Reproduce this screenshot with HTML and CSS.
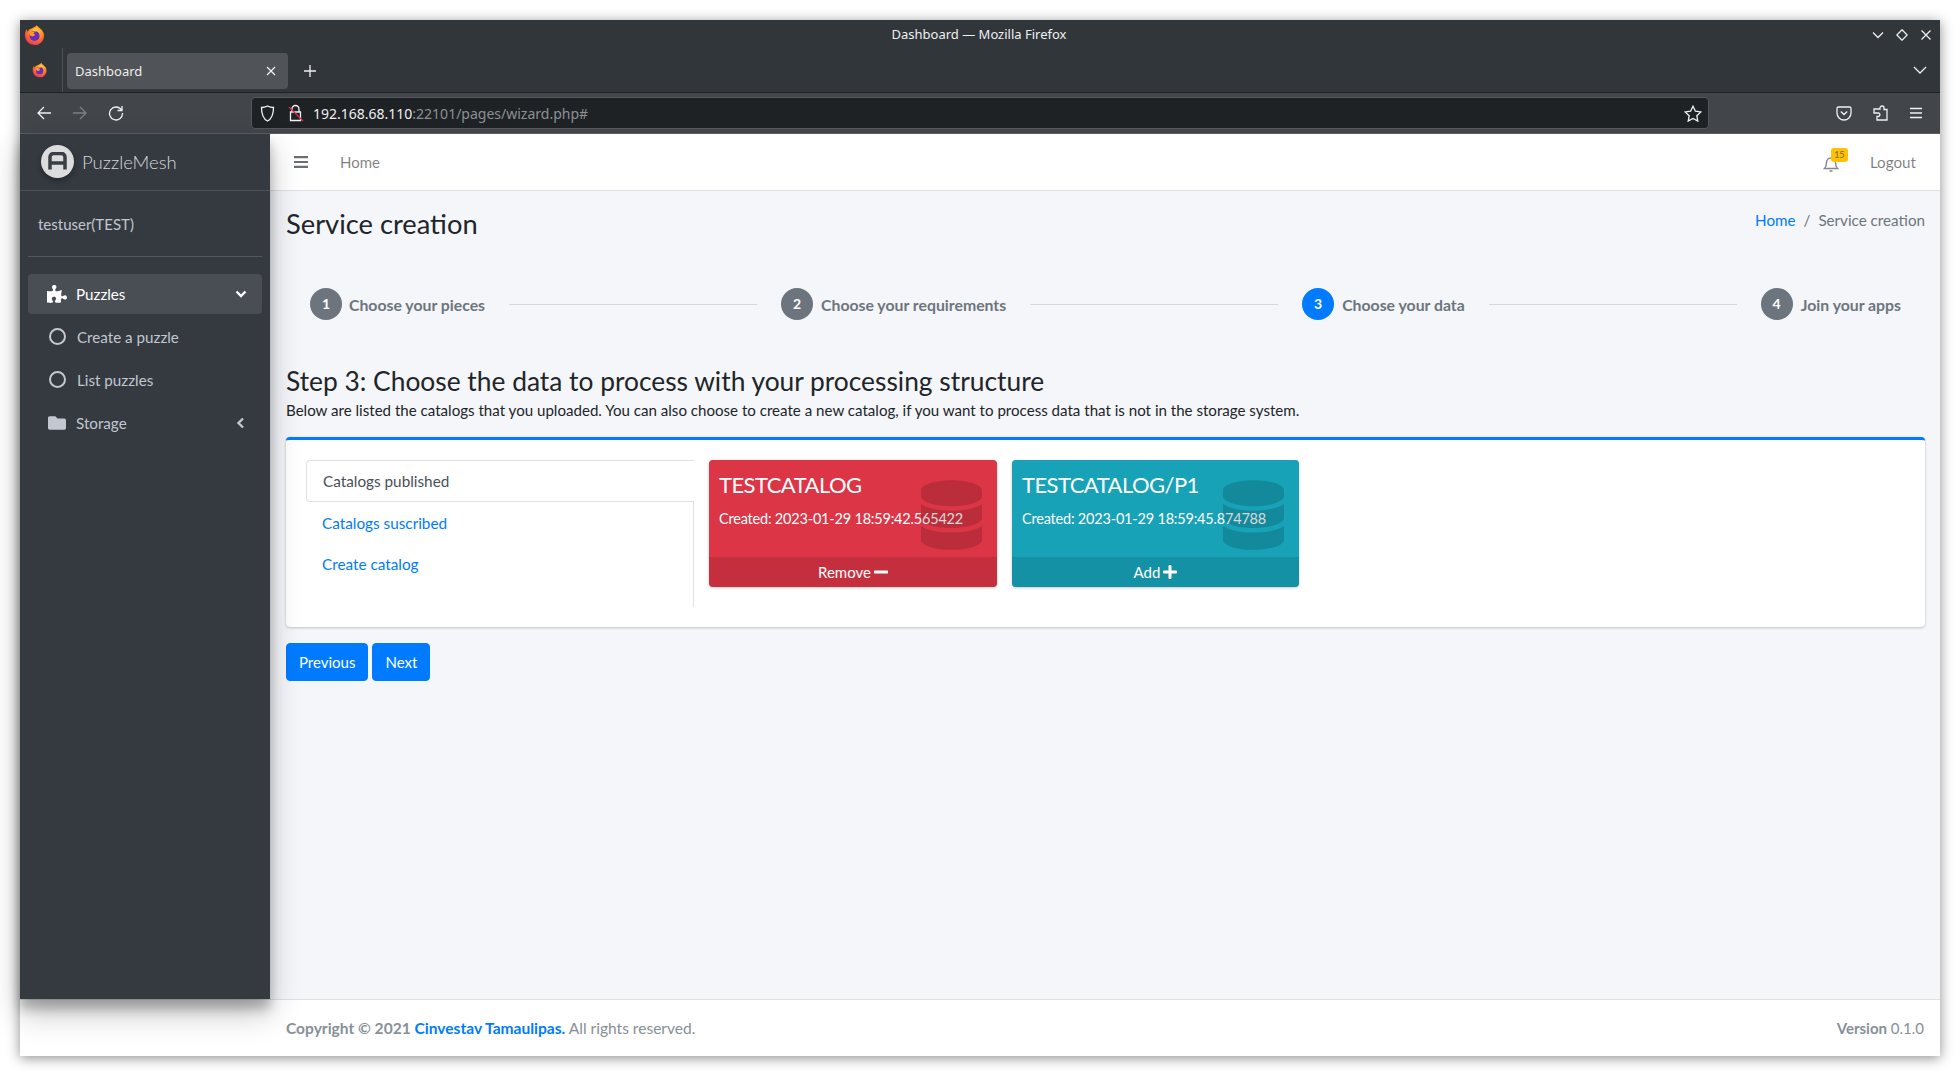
FILE: index.html
```html
<!DOCTYPE html>
<html lang="en">
<head>
  <meta charset="UTF-8">
  <title>Dashboard</title>
  <link rel="stylesheet" href="styles.css">
</head>
<body>
  <svg class="defs" width="0" height="0">
    <defs>
      <radialGradient id="fxbody" cx="60%" cy="30%" r="80%">
        <stop offset="0" stop-color="#ffd43a"/>
        <stop offset=".45" stop-color="#ff8a1f"/>
        <stop offset="1" stop-color="#e3245c"/>
      </radialGradient>
      <symbol id="firefox" viewBox="0 0 24 24">
        <path fill="url(#fxbody)" d="M14 1c1 3 6 4 7.500 9 1.500 6-2.500 13-9.500 13S1 18 1 12c0-3 1-5 2-6.500 0 1.500.6 2.300 1.300 2.800C5 6 7 5 8.500 5 10 3.500 13 3 14 1z"/>
        <circle cx="11.500" cy="13" r="5.500" fill="#6a2bc4"/>
        <path fill="#ff9a26" d="M6 10c2-2 6-3 8-1.500-2 0-3.500 1-3.500 2 2 .5 2 2 0 2.500C8 14 6 12.500 6 10z"/>
      </symbol>
      <symbol id="database" viewBox="0 0 448 512">
        <path d="M448 73.143v45.714C448 159.143 347.667 192 224 192S0 159.143 0 118.857V73.143C0 32.857 100.333 0 224 0s224 32.857 224 73.143zM448 176v102.857C448 319.143 347.667 352 224 352S0 319.143 0 278.857V176c48.125 33.143 136.208 48.572 224 48.572S399.874 209.143 448 176zm0 160v102.857C448 479.143 347.667 512 224 512S0 479.143 0 438.857V336c48.125 33.143 136.208 48.572 224 48.572S399.874 369.143 448 336z"/>
      </symbol>
    </defs>
  </svg>

  <div class="window">
    <div class="titlebar">
      <svg class="fx-big"><use href="#firefox"/></svg>
      <div class="win-title">Dashboard — Mozilla Firefox</div>
      <div class="win-btns">
        <svg width="12" height="12" viewBox="0 0 12 12"><path d="M1 3.500l5 5 5-5"/></svg>
        <svg width="12" height="12" viewBox="0 0 12 12"><path d="M6 .8L11.200 6 6 11.200.8 6z"/></svg>
        <svg width="12" height="12" viewBox="0 0 12 12"><path d="M1.500 1.500l9 9M10.500 1.500l-9 9"/></svg>
      </div>
    </div>

    <div class="tabbar">
      <div class="tab-fx"><svg class="fx-small"><use href="#firefox"/></svg></div>
      <div class="tab">
        <span>Dashboard</span>
        <svg width="10" height="10" viewBox="0 0 10 10"><path d="M1 1l8 8M9 1l-8 8"/></svg>
      </div>
      <svg class="tab-new" width="14" height="14" viewBox="0 0 14 14"><path d="M7 1v12M1 7h12"/></svg>
      <svg class="tab-list" width="14" height="14" viewBox="0 0 14 14"><path d="M1 4l6 6 6-6"/></svg>
    </div>

    <div class="toolbar">
      <div class="nav-btns">
        <svg width="16" height="16" viewBox="0 0 16 16"><path d="M15 8H2M8 2L2 8l6 6"/></svg>
        <svg class="dim" width="16" height="16" viewBox="0 0 16 16"><path d="M1 8h13M8 2l6 6-6 6"/></svg>
        <svg width="16" height="16" viewBox="0 0 16 16"><path d="M13.500 5A6.500 6.500 0 1 0 14.500 8M14 1v4.500H9.500"/></svg>
      </div>
      <div class="urlbar">
        <svg width="15" height="17" viewBox="0 0 15 17"><path d="M7.500 1c2 1 4 1.500 6 1.500 0 6-1 11-6 13.500-5-2.500-6-7.500-6-13.500 2 0 4-.5 6-1.500z"/></svg>
        <svg class="lock" width="16" height="18" viewBox="0 0 16 18"><path d="M4 8V5a3.500 3.500 0 0 1 7 0v3M2.500 8h10v8.500h-10z"/><path class="slash" d="M1 3l14 14"/></svg>
        <div class="url"><b>192.168.68.110</b>:22101/pages/wizard.php#</div>
        <svg width="18" height="17" viewBox="0 0 18 17"><path d="M9 1.200l2.400 5 5.400.7-4 3.800 1 5.400L9 13.500l-4.800 2.600 1-5.400-4-3.800 5.400-.7z"/></svg>
      </div>
      <div class="tool-btns">
        <svg width="16" height="16" viewBox="0 0 16 16"><path d="M2.500 2h11A1.500 1.500 0 0 1 15 3.500V8A7 7 0 0 1 1 8V3.500A1.500 1.500 0 0 1 2.500 2zM4.800 6.500L8 9.500l3.200-3"/></svg>
        <svg width="16" height="16" viewBox="0 0 16 16"><path d="M8 3.500V3a2 2 0 0 1 4 0v1.500h3V15H5v-3.500h1.200a1.700 1.700 0 0 0 0-3.500H2V4h6z"/></svg>
        <svg width="16" height="16" viewBox="0 0 16 16"><path d="M2 3.500h12M2 8h12M2 12.500h12"/></svg>
      </div>
    </div>

    <div class="app">
      <aside class="sidebar">
        <div class="brand">
          <div class="brand-logo">
            <svg width="19" height="19" viewBox="0 0 19 19"><path d="M2 17.500V5a3.500 3.500 0 0 1 3.500-3.500h8A3.500 3.500 0 0 1 17 5v12.500M2 11h15" /></svg>
          </div>
          <span class="brand-name">PuzzleMesh</span>
        </div>
        <div class="user">testuser(TEST)</div>
        <nav class="menu">
          <a class="menu-item active" href="#">
            <svg class="menu-ico" width="20" height="18" viewBox="0 0 576 512"><path d="M519.442 288.651c-41.519 0-59.5 31.593-82.058 31.593C377.409 320.244 432 144 432 144s-196.288 80-196.288-3.297c0-35.827 36.288-46.25 36.288-85.985C272 19.216 243.885 0 210.539 0c-34.654 0-66.366 18.891-66.366 56.346 0 41.364 31.711 59.277 31.711 81.75C175.885 207.719 0 166.758 0 166.758v333.237s178.635 41.047 178.635-28.662c0-22.473-40-40.107-40-81.471 0-37.456 29.25-56.346 63.577-56.346 33.673 0 61.788 19.216 61.788 54.717 0 39.735-36.288 50.158-36.288 85.985 0 60.803 129.675 25.73 181.23 25.73 0 0-34.725-120.101 25.827-120.101 35.962 0 46.423 36.152 86.308 36.152C556.712 416 576 387.99 576 354.443c0-34.199-18.962-65.792-56.558-65.792z"/></svg>
            <span>Puzzles</span>
            <svg class="menu-arrow" width="12" height="12" viewBox="0 0 12 12"><path d="M1.500 3.500L6 8l4.500-4.500"/></svg>
          </a>
          <a class="menu-item" href="#"><span class="ring"></span><span>Create a puzzle</span></a>
          <a class="menu-item" href="#"><span class="ring"></span><span>List puzzles</span></a>
          <a class="menu-item" href="#">
            <svg class="menu-ico" width="20" height="18" viewBox="0 0 512 512"><path d="M464 128H272l-64-64H48C21.49 64 0 85.49 0 112v288c0 26.51 21.49 48 48 48h416c26.51 0 48-21.49 48-48V176c0-26.51-21.49-48-48-48z"/></svg>
            <span>Storage</span>
            <svg class="menu-arrow" width="12" height="12" viewBox="0 0 12 12"><path d="M8 1.500L3.500 6 8 10.500"/></svg>
          </a>
        </nav>
      </aside>

      <div class="main">
        <header class="navbar">
          <svg class="burger" width="14" height="12" viewBox="0 0 14 12"><path d="M0 0h14v2.200H0zM0 4.900h14v2.200H0zM0 9.800h14V12H0z"/></svg>
          <a class="nav-home" href="#">Home</a>
          <div class="nav-bell">
            <svg width="16" height="18" viewBox="0 0 16 18"><path d="M1.500 13.500c1.500-1.500 2-3 2-6a4.500 4.500 0 0 1 9 0c0 3 .5 4.500 2 6zM6.500 16h3"/></svg>
            <span class="badge">15</span>
          </div>
          <a class="nav-logout" href="#">Logout</a>
        </header>

        <section class="content">
          <div class="page-head">
            <h1>Service creation</h1>
            <div class="crumbs"><a href="#">Home</a><i>/</i><span>Service creation</span></div>
          </div>

          <div class="stepper">
            <div class="step"><span class="circle">1</span><span>Choose your pieces</span></div>
            <div class="line"></div>
            <div class="step"><span class="circle">2</span><span>Choose your requirements</span></div>
            <div class="line"></div>
            <div class="step"><span class="circle current">3</span><span>Choose your data</span></div>
            <div class="line"></div>
            <div class="step"><span class="circle">4</span><span>Join your apps</span></div>
          </div>

          <h3>Step 3: Choose the data to process with your processing structure</h3>
          <p class="lead">Below are listed the catalogs that you uploaded. You can also choose to create a new catalog, if you want to process data that is not in the storage system.</p>

          <div class="panel">
            <div class="tabs">
              <a class="tab-link active" href="#">Catalogs published</a>
              <a class="tab-link" href="#">Catalogs suscribed</a>
              <a class="tab-link" href="#">Create catalog</a>
            </div>
            <div class="small-box red">
              <h4>TESTCATALOG</h4>
              <div class="created">Created: 2023-01-29 18:59:42.565422</div>
              <svg class="box-ico"><use href="#database"/></svg>
              <a class="box-foot" href="#">Remove <svg width="14" height="14" viewBox="0 0 14 14"><path d="M1 5.500h12a1 1 0 0 1 0 3H1a1 1 0 0 1 0-3z"/></svg></a>
            </div>
            <div class="small-box teal">
              <h4>TESTCATALOG/P1</h4>
              <div class="created">Created: 2023-01-29 18:59:45.874788</div>
              <svg class="box-ico"><use href="#database"/></svg>
              <a class="box-foot" href="#">Add <svg width="14" height="14" viewBox="0 0 14 14"><path d="M5.500 1a1 1 0 0 1 1-1h1a1 1 0 0 1 1 1v4.500H13a1 1 0 0 1 1 1v1a1 1 0 0 1-1 1H8.500V13a1 1 0 0 1-1 1h-1a1 1 0 0 1-1-1V8.500H1a1 1 0 0 1-1-1v-1a1 1 0 0 1 1-1h4.500z"/></svg></a>
            </div>
          </div>

          <div class="wizard-btns">
            <button>Previous</button>
            <button>Next</button>
          </div>
        </section>
      </div>
    </div>

    <footer class="footer">
      <div><b>Copyright © 2021 <a href="#">Cinvestav Tamaulipas.</a></b> All rights reserved.</div>
      <div class="version"><b>Version</b> 0.1.0</div>
    </footer>
  </div>
</body>
</html>
```

FILE: styles.css
```css
* { box-sizing: border-box; }
html, body { height: 100%; }
body {
  margin: 0;
  padding: 20px;
  background: #fff;
  font-family: Lato, "Noto Sans", sans-serif;
  font-size: 15px;
  color: #212529;
  overflow: hidden;
}
a { text-decoration: none; color: #007bff; }
.defs { position: absolute; }

.window {
  height: 1036px;
  display: flex;
  flex-direction: column;
  box-shadow: 0 2px 12px rgba(0, 0, 0, .45);
  background: #f4f6f9;
}

/* firefox chrome */
.titlebar, .tabbar, .toolbar { font-family: "Noto Sans", sans-serif; color: #eee; flex: none; }
.titlebar svg path, .tabbar svg path, .toolbar svg path {
  fill: none;
  stroke: #eff0f1;
  stroke-width: 1.3;
}
.titlebar {
  height: 28px;
  background: #31363b;
  display: grid;
  grid-template-columns: 1fr auto 1fr;
  align-items: center;
  padding: 0 8px 0 4px;
}
.fx-big { width: 22px; height: 24px; margin-top: 1px; }
.win-title { font-size: 13px; color: #eff0f1; margin-left: 2px; }
.win-btns { display: flex; justify-content: flex-end; gap: 12px; padding-top: 2px; }
.tabbar {
  height: 45px;
  background: #31363b;
  border-bottom: 1px solid #1f2225;
  display: flex;
  align-items: center;
}
.tab-fx {
  width: 43px;
  height: 44px;
  border-right: 1px solid #4d5257;
  display: flex;
  align-items: center;
  justify-content: center;
}
.fx-small { width: 16px; height: 20px; margin-right: 3px; }
.tab {
  width: 221px;
  height: 36px;
  margin: 2px 0 0 4px;
  padding: 0 12px 0 8px;
  border-radius: 4px;
  background: #505357;
  display: flex;
  align-items: center;
  justify-content: space-between;
  font-size: 13px;
}
.tab-new { margin: 2px 0 0 15px; }
.tab-list { margin-left: auto; margin-right: 13px; }
.toolbar {
  height: 41px;
  background: #42464a;
  border-bottom: 1px solid #5a5e62;
  display: flex;
  align-items: center;
  padding: 0 16px;
}
.toolbar .dim path { stroke: #7c7f83; }
.nav-btns { display: flex; gap: 20px; width: 215px; }
.urlbar {
  width: 1458px;
  height: 32px;
  background: #1f2225;
  border: 1px solid #55595d;
  border-radius: 4px;
  display: flex;
  align-items: center;
  padding: 0 6px 0 8px;
  gap: 13px;
}
.urlbar .lock { margin-right: -4px; }
.toolbar .urlbar .lock .slash { stroke: #e22850; }
.url { flex: 1; font-size: 14px; color: #8d9093; }
.url b { font-weight: 400; color: #eff0f1; }
.tool-btns { display: flex; gap: 20px; margin-left: 127px; }

/* app */
.app { flex: 1; display: flex; min-height: 0; }
.sidebar {
  width: 250px;
  flex: none;
  background: #343a40;
  position: relative;
  z-index: 2;
  padding: 0 8px;
  box-shadow: 0 14px 28px rgba(0, 0, 0, .25), 0 10px 10px rgba(0, 0, 0, .22);
}
.brand {
  height: 57px;
  margin: 0 -8px;
  padding: 0 0 2px 21px;
  border-bottom: 1px solid #4b545c;
  display: flex;
  align-items: center;
  gap: 8px;
}
.brand-logo {
  width: 33px;
  height: 33px;
  border-radius: 50%;
  background: #dcdcdc;
  display: flex;
  align-items: center;
  justify-content: center;
  box-shadow: 0 3px 6px rgba(0, 0, 0, .3);
}
.brand-logo path { fill: none; stroke: #3a3f44; stroke-width: 3.500; }
.brand-name { margin-top: 2px; font-size: 18.500px; font-weight: 300; color: rgba(255, 255, 255, .8); }
.user {
  height: 66px;
  margin-bottom: 17px;
  padding: 0 10px;
  border-bottom: 1px solid #4f5962;
  display: flex;
  align-items: center;
  color: #c2c7d0;
}
.menu { display: flex; flex-direction: column; gap: 3px; }
.menu-item {
  height: 40px;
  border-radius: 4px;
  padding: 0 15px 0 19px;
  display: flex;
  align-items: center;
  color: #c2c7d0;
  font-size: 15.200px;
}
.menu-item.active { background: rgba(255, 255, 255, .1); color: #fff; }
.menu-ico { width: 20px; margin-right: 9px; flex: none; fill: #c2c7d0; }
.active .menu-ico { fill: #fff; }
.ring {
  width: 17px;
  height: 17px;
  margin: 0 11px 2px 2px;
  border: 2px solid #c2c7d0;
  border-radius: 50%;
  flex: none;
}
.menu-arrow { margin-left: auto; }
.menu-arrow path { fill: none; stroke: #c2c7d0; stroke-width: 2.400; }
.active .menu-arrow path { stroke: #fff; }

.main { flex: 1; min-width: 0; display: flex; flex-direction: column; }
.navbar {
  height: 57px;
  flex: none;
  background: #fff;
  border-bottom: 1px solid #dee2e6;
  display: flex;
  align-items: center;
  padding: 0 24px;
  color: rgba(0, 0, 0, .5);
}
.burger { fill: #6b6f73; }
.nav-home { margin-left: 32px; color: rgba(0, 0, 0, .5); }
.nav-bell { margin-left: auto; position: relative; height: 18px; padding-top: 2px; }
.nav-bell path { fill: none; stroke: #85888b; stroke-width: 1.400; }
.badge {
  position: absolute;
  left: 8px;
  top: -5px;
  width: 17px;
  height: 14px;
  border-radius: 3px;
  background: #ffc107;
  color: #7a6a20;
  font-size: 9px;
  line-height: 14px;
  text-align: center;
}
.nav-logout { margin-left: 31px; font-size: 15.200px; color: rgba(0, 0, 0, .5); }

.content { flex: 1; padding: 0 15px 0 16px; min-height: 0; }
.page-head {
  height: 70px;
  display: flex;
  justify-content: space-between;
  align-items: flex-start;
  padding-top: 13px;
}
h1 { margin: 0; font-size: 27.300px; font-weight: 400; line-height: 40px; }
.crumbs { margin-top: 7px; font-size: 15.200px; color: #6c757d; }
.crumbs i { font-style: normal; margin: 0 8px; }
.stepper {
  height: 46px;
  margin-top: 20px;
  padding: 0 24px;
  display: flex;
  align-items: center;
  font-weight: 700;
  font-size: 15.800px;
  color: #6c757d;
}
.step { display: flex; align-items: center; gap: 7px; }
.step:not(:first-child) { gap: 8px; }
.circle {
  width: 32px;
  height: 32px;
  border-radius: 50%;
  background: #6c757d;
  color: #fff;
  font-size: 14px;
  line-height: 32px;
  text-align: center;
}
.circle.current { background: #007bff; }
.line { flex: 1; height: 1px; margin: 0 24px; background: #d6d8db; }
h3 { margin: 37px 0 0; font-size: 26.350px; font-weight: 400; line-height: 34px; }
.lead { margin: 0; font-size: 15.100px; line-height: 22px; padding-top: 1px; }
.panel {
  height: 190px;
  margin-top: 16px;
  padding: 20px;
  background: #fff;
  border-top: 3px solid #007bff;
  border-radius: 4px;
  box-shadow: 0 0 1px rgba(0, 0, 0, .125), 0 1px 3px rgba(0, 0, 0, .2);
  display: flex;
  align-items: flex-start;
  gap: 15px;
}
.tabs {
  width: 388px;
  height: 147px;
  border-right: 1px solid #dee2e6;
  display: flex;
  flex-direction: column;
  font-size: 15.300px;
}
.tab-link { height: 41px; padding: 0 16px; display: flex; align-items: center; }
.tab-link.active {
  height: 42px;
  margin-right: -1px;
  background: #fff;
  color: #495057;
  border: 1px solid #dee2e6;
  border-right: none;
  border-radius: 4px 0 0 4px;
}
.small-box {
  height: 127px;
  border-radius: 4px;
  color: #fff;
  position: relative;
  padding: 10px;
  box-shadow: 0 0 1px rgba(0, 0, 0, .125), 0 1px 3px rgba(0, 0, 0, .2);
  overflow: hidden;
}
.small-box.red { background: #dc3545; width: 288px; }
.small-box.teal { background: #17a2b8; width: 287px; }
h4 { margin: 0; font-size: 22px; letter-spacing: -.55px; font-weight: 400; line-height: 30px; }
.created { margin-top: 9px; font-size: 14.500px; letter-spacing: -.2px; line-height: 20px; position: relative; }
.box-ico {
  position: absolute;
  right: 15px;
  top: 20px;
  width: 61px;
  height: 70px;
  fill: rgba(0, 0, 0, .15);
}
.box-foot {
  position: absolute;
  left: 0;
  right: 0;
  bottom: 0;
  height: 30px;
  background: rgba(0, 0, 0, .1);
  color: #fff;
  display: flex;
  align-items: center;
  justify-content: center;
  gap: 3px;
}
.box-foot svg { fill: #fff; }
.wizard-btns { margin-top: 16px; display: flex; gap: 4px; }
button {
  height: 38px;
  padding: 0 12px;
  border: 1px solid #007bff;
  border-radius: 4px;
  background: #007bff;
  color: #fff;
  font: inherit;
}
.footer {
  height: 57px;
  flex: none;
  background: #fff;
  border-top: 1px solid #dee2e6;
  padding: 0 16px 0 266px;
  display: flex;
  justify-content: space-between;
  align-items: center;
  color: #869099;
  font-size: 15.550px;
}
.version { font-size: 15px; }
```
